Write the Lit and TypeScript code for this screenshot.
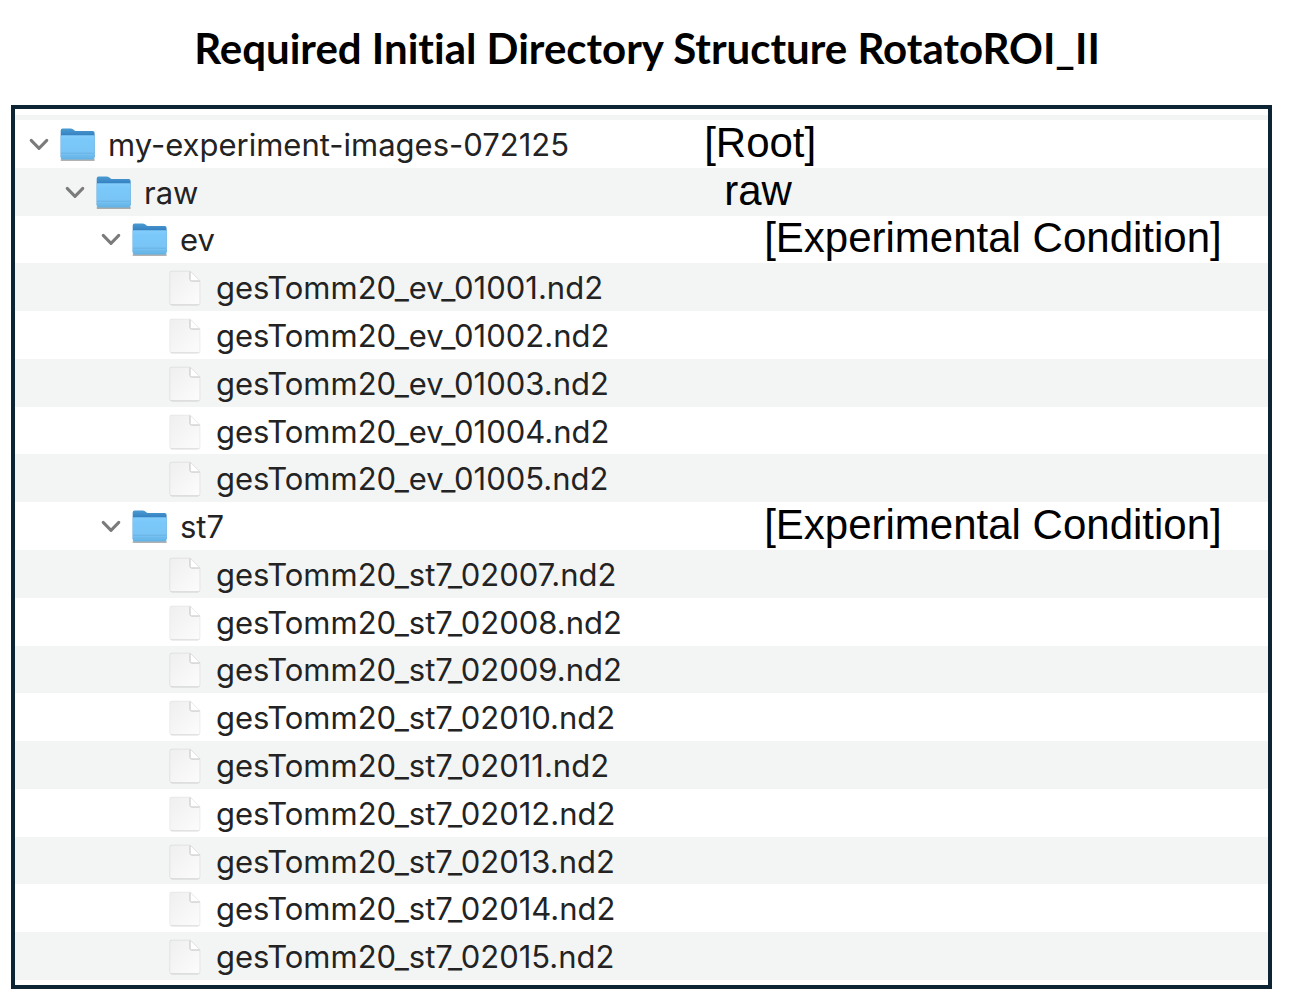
import { LitElement, html, svg, css, nothing } from "lit";
import { customElement, property, state } from "lit/decorators.js";

interface Entry {
  name: string;
  depth: number;
  folder?: boolean;
  note?: string;
  noteLevel?: number;
}

const file = (name: string): Entry => ({ name, depth: 3 });

const ENTRIES: Entry[] = [
  { name: "my-experiment-images-072125", depth: 0, folder: true, note: "[Root]", noteLevel: 0 },
  { name: "raw", depth: 1, folder: true, note: "raw", noteLevel: 1 },
  { name: "ev", depth: 2, folder: true, note: "[Experimental Condition]", noteLevel: 3 },
  file("gesTomm20_ev_01001.nd2"),
  file("gesTomm20_ev_01002.nd2"),
  file("gesTomm20_ev_01003.nd2"),
  file("gesTomm20_ev_01004.nd2"),
  file("gesTomm20_ev_01005.nd2"),
  { name: "st7", depth: 2, folder: true, note: "[Experimental Condition]", noteLevel: 3 },
  file("gesTomm20_st7_02007.nd2"),
  file("gesTomm20_st7_02008.nd2"),
  file("gesTomm20_st7_02009.nd2"),
  file("gesTomm20_st7_02010.nd2"),
  file("gesTomm20_st7_02011.nd2"),
  file("gesTomm20_st7_02012.nd2"),
  file("gesTomm20_st7_02013.nd2"),
  file("gesTomm20_st7_02014.nd2"),
  file("gesTomm20_st7_02015.nd2"),
];

const folderShape = svg`
  <defs>
    <linearGradient id="back" x1="0" y1="0" x2="0" y2="1">
      <stop offset="0" stop-color="#4a9bd3" />
      <stop offset="0.25" stop-color="#3580c0" />
    </linearGradient>
    <linearGradient id="front" x1="0" y1="0" x2="0" y2="1">
      <stop offset="0" stop-color="#83cdfb" />
      <stop offset="0.2" stop-color="#7ac8fa" />
      <stop offset="0.75" stop-color="#78c4f5" />
      <stop offset="1" stop-color="#5fb0e3" />
    </linearGradient>
  </defs>
  <path d="M1.5 33h32.4" stroke="#000" stroke-opacity="0.3" stroke-width="2" stroke-linecap="round" />
  <path d="M0.7 3.4Q0.7 1.4 2.6 1.4H10.6Q12 1.4 13 2.2L14.6 3.4Q15.5 4 16.8 4H32.6Q34.6 4 34.6 6V30H0.7Z" fill="url(#back)" />
  <path d="M0.7 9.4Q0.7 8.2 2 8.2H33.3Q34.6 8.2 34.6 9.4V30.6Q34.6 32.6 32.6 32.6H2.7Q0.7 32.6 0.7 30.6Z" fill="url(#front)" />
  <path d="M1 26.2H34.3" stroke="#62abdb" stroke-width="0.7" />
  <path d="M1 28.8H34.3" stroke="#69b4e4" stroke-width="0.5" />
`;

const fileShape = svg`
  <defs>
    <linearGradient id="sheet" x1="0" y1="0" x2="1" y2="1">
      <stop offset="0" stop-color="#efefef" />
      <stop offset="1" stop-color="#fcfcfc" />
    </linearGradient>
  </defs>
  <path d="M3.6 1.4H22L31.6 11V33Q31.6 34.6 30 34.6H3.8Q2.2 34.6 2.2 33V3Q2.2 1.4 3.6 1.4Z" fill="none" stroke="#000" stroke-opacity="0.1" stroke-width="1.4" />
  <path d="M3.4 34.8H30.4" stroke="#000" stroke-opacity="0.16" stroke-width="1" />
  <path d="M3.6 1.4H22L31.6 11V33Q31.6 34.4 30 34.4H3.8Q2.2 34.4 2.2 33V3Q2.2 1.4 3.6 1.4Z" fill="url(#sheet)" />
  <path d="M22 1.6V9.4Q22 11 23.6 11H31.6Z" fill="#fff" />
  <path d="M22 1.6V9.4Q22 11 23.6 11H31.6" fill="none" stroke="#c0c0c0" stroke-width="1" />
`;

@customElement("tree-row")
export class TreeRow extends LitElement {
  @property({ attribute: false }) entry!: Entry;
  @property({ type: Boolean }) open = true;

  static styles = css`
    :host {
      display: grid;
      grid-template-columns: 11fr 9fr;
      align-items: center;
      min-width: 0;
    }
    .item {
      display: flex;
      align-items: center;
      padding: 2px 0 0 12px;
      white-space: nowrap;
      color: #232323;
      font: 31px/40px Inter, "Liberation Sans", sans-serif;
    }
    .depth-1 { padding-left: 48px; }
    .depth-2 { padding-left: 84px; }
    .depth-3 { padding-left: 120px; }
    .toggle,
    .spacer {
      flex: none;
      width: 24px;
      height: 24px;
      margin-right: 9px;
    }
    .toggle {
      padding: 0;
      border: 0;
      background: none;
      cursor: pointer;
    }
    .chevron { display: block; }
    .closed { transform: rotate(-90deg); }
    .icon {
      flex: none;
      width: 36px;
      height: 36px;
      margin-right: 12px;
    }
    .note {
      padding-bottom: 2px;
      white-space: nowrap;
      color: #000;
      font: 42px/44px "Liberation Sans", Arial, sans-serif;
    }
    .note-1 { padding-left: 20px; }
    .note-3 { padding-left: 60px; }
  `;

  private toggle() {
    this.dispatchEvent(new CustomEvent("toggle-entry", { bubbles: true, composed: true }));
  }

  render() {
    const e = this.entry;
    return html`
      <div class="item depth-${e.depth}">
        ${e.folder
          ? html`<button class="toggle" type="button" aria-labelledby="name" aria-expanded=${this.open ? "true" : "false"} @click=${this.toggle}>
              <svg class="chevron ${this.open ? "" : "closed"}" width="24" height="24" viewBox="0 0 24 24" aria-hidden="true">
                <path d="M4.2 7.4L12 15.4L19.8 7.4" fill="none" stroke="#7b7b7b" stroke-width="3" stroke-linecap="round" stroke-linejoin="round" />
              </svg>
            </button>`
          : html`<span class="spacer"></span>`}
        <svg class="icon" viewBox="0 0 36 36" aria-hidden="true">${e.folder ? folderShape : fileShape}</svg>
        <span id="name">${e.name}</span>
      </div>
      ${e.note ? html`<div class="note note-${e.noteLevel}">${e.note}</div>` : nothing}
    `;
  }
}

@customElement("app-root")
export class AppRoot extends LitElement {
  @state() private closed = new Set<number>();

  static styles = css`
    :host {
      display: flex;
      flex-direction: column;
      box-sizing: border-box;
      min-height: 100vh;
      padding: 20px 0 17px;
      background: #fff;
    }
    .title {
      margin: 0 0 29px;
      text-align: center;
      color: #000;
      font: bold 42px/56px Lato, "Open Sans", sans-serif;
      font-variant-ligatures: none;
    }
    .frame {
      flex: 1;
      display: flex;
      flex-direction: column;
      margin: 0 22px 0 11px;
      border: 4px solid #0c2433;
      padding: 6px 0 5px;
    }
    .edge {
      height: 5px;
      background: #f3f5f4;
    }
    .tree {
      flex: 1;
      display: grid;
      grid-auto-rows: 1fr;
    }
    .striped { background: #f3f5f4; }
  `;

  private toggle(index: number) {
    const next = new Set(this.closed);
    if (!next.delete(index)) next.add(index);
    this.closed = next;
  }

  private visible(): number[] {
    const shown: number[] = [];
    let limit = Infinity;
    ENTRIES.forEach((e, i) => {
      if (e.depth > limit) return;
      limit = this.closed.has(i) ? e.depth : Infinity;
      shown.push(i);
    });
    return shown;
  }

  render() {
    return html`
      <h1 class="title">Required Initial Directory Structure RotatoROI_II</h1>
      <main class="frame">
        <div class="edge"></div>
        <div class="tree">
          ${this.visible().map(
            (i, row) => html`<tree-row
              class=${row % 2 ? "striped" : "plain"}
              .entry=${ENTRIES[i]}
              .open=${!this.closed.has(i)}
              @toggle-entry=${() => this.toggle(i)}
            ></tree-row>`
          )}
        </div>
      </main>
    `;
  }
}
